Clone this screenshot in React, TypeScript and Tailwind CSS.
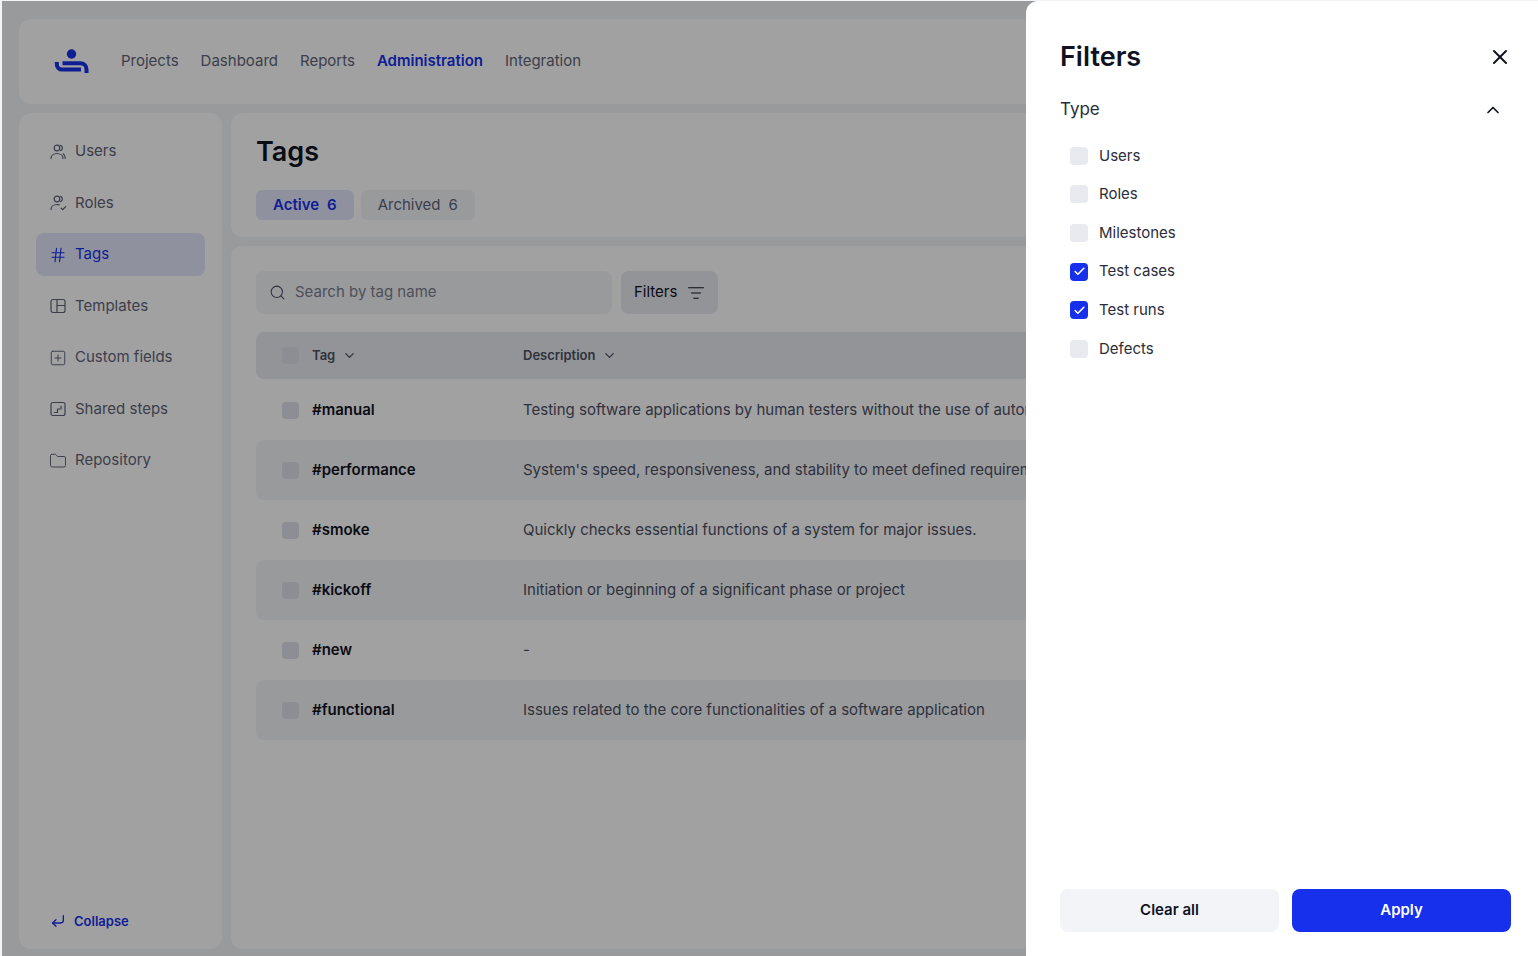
import { ChevronDown, ChevronUp, CornerDownLeft, Check, Folder, Hash, ListFilter, Search, SquarePlus, X } from "lucide-react";
import type { ReactNode } from "react";

function UsersIcon() {
  return (
    <svg width="18" height="18" viewBox="0 0 18 18" fill="none" stroke="currentColor" strokeWidth="1.2" strokeLinecap="round">
      <circle cx="8" cy="5" r="2.8" />
      <path d="M2 15.5c0-3 2.6-5 6-5s6 2 6 5" />
      <path d="M11.6 2.4a2.8 2.8 0 0 1 0 5.2" />
      <path d="M14.2 10.8c1.2.8 2 2.4 2 4.7" />
    </svg>
  );
}

function RolesIcon() {
  return (
    <svg width="18" height="18" viewBox="0 0 18 18" fill="none" stroke="currentColor" strokeWidth="1.2" strokeLinecap="round" strokeLinejoin="round">
      <circle cx="8" cy="5" r="2.8" />
      <path d="M2 15.5c0-3 2.6-5 6-5 .8 0 1.5.1 2.2.3" />
      <path d="M11.6 2.4a2.8 2.8 0 0 1 0 5.2" />
      <path d="M12.2 14.2l1.6 1.5 2.8-3" />
    </svg>
  );
}

function TemplatesIcon() {
  return (
    <svg width="18" height="18" viewBox="0 0 18 18" fill="none" stroke="currentColor" strokeWidth="1.2">
      <rect x="2" y="2.5" width="14" height="13" rx="2" />
      <path d="M8 2.5v13M8 8.5h8" />
    </svg>
  );
}

function StepsIcon() {
  return (
    <svg width="18" height="18" viewBox="0 0 18 18" fill="none" stroke="currentColor" strokeWidth="1.2" strokeLinecap="round" strokeLinejoin="round">
      <rect x="2" y="2.5" width="14" height="13" rx="2" />
      <path d="M5.5 12.5h3v-3.5h3.5V6" />
    </svg>
  );
}

function Logo() {
  return (
    <svg width="36" height="26" viewBox="0 0 36 26" fill="none">
      <circle cx="17.5" cy="5" r="4.7" fill="#1730ec" />
      <path d="M2.8 13v2c0 3.2 2.2 5.6 5.5 5.6H27" stroke="#1730ec" strokeWidth="4" />
      <path d="M8.5 14.2H26c4 0 6.5 2.4 6.5 6.2V24" stroke="#1730ec" strokeWidth="4" />
    </svg>
  );
}

const sideItems: { label: string; icon: ReactNode; active?: boolean }[] = [
  { label: "Users", icon: <UsersIcon /> },
  { label: "Roles", icon: <RolesIcon /> },
  { label: "Tags", icon: <Hash size={18} strokeWidth={1.5} />, active: true },
  { label: "Templates", icon: <TemplatesIcon /> },
  { label: "Custom fields", icon: <SquarePlus size={18} strokeWidth={1.3} /> },
  { label: "Shared steps", icon: <StepsIcon /> },
  { label: "Repository", icon: <Folder size={18} strokeWidth={1.3} /> },
];

const rows = [
  { tag: "#manual", text: "Testing software applications by human testers without the use of automation tools" },
  { tag: "#performance", text: "System's speed, responsiveness, and stability to meet defined requirements" },
  { tag: "#smoke", text: "Quickly checks essential functions of a system for major issues." },
  { tag: "#kickoff", text: "Initiation or beginning of a significant phase or project" },
  { tag: "#new", text: "-" },
  { tag: "#functional", text: "Issues related to the core functionalities of a software application" },
];

const filterTypes = [
  { label: "Users", on: false },
  { label: "Roles", on: false },
  { label: "Milestones", on: false },
  { label: "Test cases", on: true },
  { label: "Test runs", on: true },
  { label: "Defects", on: false },
];

export default function App() {
  return (
    <div className="relative h-[956px] w-full overflow-hidden bg-[#f3f4f8] font-['Inter',sans-serif]">
      <div className="flex h-full flex-col gap-[9px] px-[19px] pt-[19px] pb-[7px]">
        <header className="flex h-[85px] shrink-0 items-center rounded-xl bg-white pl-[35px] text-[15px] text-[#5f6478]">
          <Logo />
          <nav className="ml-[31px] flex gap-[22px]">
            <span>Projects</span>
            <span>Dashboard</span>
            <span>Reports</span>
            <span className="font-semibold text-[#1730ec]">Administration</span>
            <span>Integration</span>
          </nav>
        </header>

        <div className="flex min-h-0 flex-1 gap-[9px]">
          <aside className="flex w-[203px] shrink-0 flex-col rounded-xl bg-white px-[17px] pt-[17px] pb-[18px]">
            <div className="flex flex-col gap-[8.5px]">
              {sideItems.map((item) => (
                <div
                  key={item.label}
                  className={`flex h-[43px] items-center gap-[8px] rounded-lg px-[13px] text-[15px] ${
                    item.active ? "bg-[#e2e6fb] text-[#1730ec]" : "text-[#5f6478]"
                  }`}
                >
                  {item.icon}
                  {item.label}
                </div>
              ))}
            </div>
            <div className="mt-auto flex items-center gap-[8px] pl-[14px] text-[13px] font-semibold text-[#1730ec]">
              <CornerDownLeft size={16} strokeWidth={2} />
              Collapse
            </div>
          </aside>

          <main className="flex min-w-0 flex-1 flex-col gap-[9px]">
            <section className="h-[124px] shrink-0 rounded-xl bg-white px-[25px] pt-[21px]">
              <h1 className="text-[27px] leading-[36px] font-semibold text-[#10131f]">Tags</h1>
              <div className="mt-[20px] flex gap-[7px] text-[15px]">
                <div className="flex h-[30px] items-center gap-[8px] rounded-md bg-[#e2e6fb] px-[17px] font-semibold text-[#1730ec]">
                  <span>Active</span>
                  <span>6</span>
                </div>
                <div className="flex h-[30px] items-center gap-[8px] rounded-md bg-[#f3f4f8] px-[17px] text-[#5f6478]">
                  <span>Archived</span>
                  <span>6</span>
                </div>
              </div>
            </section>

            <section className="min-h-0 flex-1 rounded-xl bg-white px-[25px] pt-[25px]">
              <div className="flex gap-[9px]">
                <div className="flex h-[43px] w-[356px] items-center gap-[9px] rounded-lg bg-[#f3f4f8] pl-[13px] text-[15px] text-[#7b7f90]">
                  <Search size={17} strokeWidth={1.5} className="text-[#4b5063]" />
                  Search by tag name
                </div>
                <div className="flex h-[43px] items-center gap-[10px] rounded-lg bg-[#e9eaf0] pr-[13px] pl-[13px] text-[15px] text-[#10131f]">
                  Filters
                  <ListFilter size={18} strokeWidth={1.5} />
                </div>
              </div>

              <div className="mt-[18px] flex h-[47px] items-center rounded-lg bg-[#e9eaf0] pl-[26px] text-[13px] font-semibold text-[#4b5063]">
                <div className="h-[17px] w-[17px] rounded bg-[#dfe1e9]" />
                <div className="ml-[13px] flex w-[211px] items-center gap-[7px]">
                  Tag
                  <ChevronDown size={15} strokeWidth={2} />
                </div>
                <div className="flex items-center gap-[7px]">
                  Description
                  <ChevronDown size={15} strokeWidth={2} />
                </div>
              </div>

              <div className="mt-px">
                {rows.map((row, i) => (
                  <div
                    key={row.tag}
                    className={`flex h-[60px] items-center rounded-lg pl-[26px] text-[15px] ${i % 2 === 1 ? "bg-[#f3f4f8]" : ""}`}
                  >
                    <div className="h-[17px] w-[17px] rounded bg-[#dfe1e9]" />
                    <div className="ml-[13px] w-[211px] font-semibold text-[#10131f]">{row.tag}</div>
                    <div className="whitespace-nowrap text-[#4b5063]">{row.text}</div>
                  </div>
                ))}
              </div>
            </section>
          </main>
        </div>
      </div>

      <div className="absolute top-[1px] right-0 bottom-0 left-[2px] bg-black/37" />

      <div className="absolute top-[1px] right-0 bottom-0 flex w-[512px] flex-col rounded-tl-xl bg-white pr-[27px] pb-[24px] pl-[34px]">
        <div className="flex items-center justify-between pt-[37px]">
          <h2 className="text-[27px] leading-[38px] font-semibold text-[#10131f]">Filters</h2>
          <X size={24} strokeWidth={2} className="mr-[-1px] text-[#10131f]" />
        </div>
        <div className="mt-[21px] flex items-center justify-between pr-[8px] text-[17px] text-[#2a2d3a]">
          Type
          <ChevronUp size={20} strokeWidth={2} className="text-[#10131f]" />
        </div>
        <div className="mt-[14px] flex flex-col pl-[10px]">
          {filterTypes.map((item) => (
            <label key={item.label} className="flex h-[38.6px] items-center gap-[11px] text-[15px] text-[#2a2d3a]">
              {item.on ? (
                <span className="flex h-[18px] w-[18px] items-center justify-center rounded bg-[#1730ec] text-white">
                  <Check size={13} strokeWidth={3} />
                </span>
              ) : (
                <span className="h-[18px] w-[18px] rounded bg-[#e9eaf0]" />
              )}
              {item.label}
            </label>
          ))}
        </div>
        <div className="mt-auto flex gap-[13px]">
          <button className="h-[43px] flex-1 rounded-lg bg-[#f3f4f8] text-[15px] font-semibold text-[#10131f]">Clear all</button>
          <button className="h-[43px] flex-1 rounded-lg bg-[#1730ec] text-[15px] font-semibold text-white">Apply</button>
        </div>
      </div>
    </div>
  );
}
